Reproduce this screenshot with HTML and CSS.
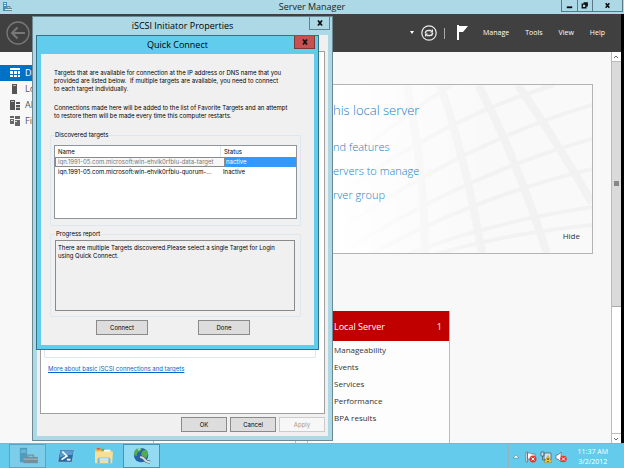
FILE: index.html
```html
<!DOCTYPE html>
<html lang="en">
<head>
<meta charset="utf-8">
<title>Server Manager</title>
<link rel="stylesheet" href="styles.css">
</head>
<body>
<div class="desktop">
  <header class="titlebar">
    <svg class="app-icon" viewBox="0 0 10 10" aria-hidden="true"><path fill="#3f8fc4" d="M1 0h4v9H1z"/><path fill="#e4f3fb" d="M2 1h2v1H2zM2 3h2v1H2z"/><path fill="#6c8593" d="M3 6h7v3H3z"/><path fill="none" stroke="#6c8593" d="M5 6V4.500h3V6"/><path fill="#dde7ec" d="M3 7h7v1H3z"/></svg>
    <h1>Server Manager</h1>
    <div class="window-buttons">
      <button class="wb-min" aria-label="Minimize"><svg viewBox="0 0 10 10"><path d="M2 6h6v2H2z"/></svg></button>
      <button class="wb-max" aria-label="Restore"><svg viewBox="0 0 10 10"><path fill="none" stroke="#111" stroke-width="1.500" d="M2.500 3.500h4v4h-4zM4 2h4v4"/></svg></button>
      <button class="wb-close" aria-label="Close"><svg viewBox="0 0 10 10"><path fill="none" stroke="#111" stroke-width="1.800" d="M3 2.500l4 5M7 2.500l-4 5"/></svg></button>
    </div>
  </header>

  <div class="workspace">
    <div class="toolbar">
      <button class="back" aria-label="Back"><svg viewBox="0 0 24 24"><circle cx="12" cy="12" r="11" fill="none" stroke="#787878" stroke-width="1.300"/><path fill="none" stroke="#787878" stroke-width="2" d="M19 12H6M11.500 6.500L6 12l5.500 5.500"/></svg></button>
      <div class="tools">
        <svg class="caret" viewBox="0 0 6 4" aria-hidden="true"><path fill="#fff" d="M1 0h4L3 3z"/></svg>
        <button class="refresh" aria-label="Refresh"><svg viewBox="0 0 16 16"><circle cx="8" cy="8" r="7.200" fill="none" stroke="#ececec" stroke-width="1.200"/><path fill="none" stroke="#ececec" stroke-width="1.500" d="M4.500 8.200V7.500a2.500 2.500 0 0 1 2.500-2h3.500M11.500 7.800v.700a2.500 2.500 0 0 1-2.500 2H5.500"/><path fill="#ececec" d="M9 7.500h3V4zM7 8.500H4V12z"/></svg></button>
        <span class="divider"></span>
        <button class="flag" aria-label="Notifications"><svg viewBox="0 0 12 16"><path fill="#fff" d="M0 0h2v15H0zM2 1h9L6 7H2z"/></svg></button>
        <button class="menu">Manage</button>
        <button class="menu">Tools</button>
        <button class="menu">View</button>
        <button class="menu">Help</button>
      </div>
    </div>

    <div class="main">
      <nav class="sidebar">
        <a class="active" href="#dashboard"><svg viewBox="0 0 12 12"><path fill="#fff" d="M1 1h10v2H1zM1 4h3v3H1zM5 4h3v3H5zM9 4h2v3H9zM1 8h3v2H1zM5 8h3v2H5zM9 8h2v2H9z"/></svg>Da</a>
        <a href="#local"><svg viewBox="0 0 12 12"><path fill="#555" d="M3 1h5v10H3z"/><path fill="#bbb" d="M4 2h3v1H4z"/></svg>Lo</a>
        <a href="#all"><svg viewBox="0 0 12 12"><path fill="#555" d="M1 1h5v10H1zM7 3h4v2H7zM7 6h4v5H7z"/><path fill="#bbb" d="M2 2h3v1H2zM7 8h4v1H7z"/></svg>Al</a>
        <a href="#files"><svg viewBox="0 0 12 12"><path fill="#666" d="M1 1h4v2H1zM1 4h4v5H1zM6 1h5v3H6zM6 5h5v6H6z"/><path fill="#ddd" d="M2 5h2v1H2zM6 6h2v1H6z"/></svg>Fil</a>
      </nav>
      <main class="dashboard">
        <section class="welcome">
          <svg class="pattern" viewBox="0 0 260 168" preserveAspectRatio="xMaxYMid slice" aria-hidden="true">
            <defs><linearGradient id="fade"><stop offset="0" stop-color="#fff"/><stop offset=".6" stop-color="#fff" stop-opacity="0"/></linearGradient></defs>
            <path fill="#f9f9f9" d="M0 0h260v168H0z"/>
            <g fill="none" stroke="#f2f2f2">
              <path stroke-width="8" d="M146 0q34 62 69 168M186 0q38 55 74 118M108 0q25 70 42 168M75 0q18 90 18 168"/>
              <path stroke-width="4" d="M0 115q110-82 222-115M0 150Q130 58 260 20M0 174Q130 90 260 54M20 180Q130 115 260 84M50 180Q140 140 260 122M90 174Q160 150 260 140M210 0l50-14M0 90Q70 30 120 0"/>
            </g>
            <path fill="url(#fade)" d="M0 0h260v168H0z"/>
          </svg>
          <h2>his local server</h2>
          <a href="#features">nd features</a>
          <a href="#servers">ervers to manage</a>
          <a href="#group">rver group</a>
          <button class="hide">Hide</button>
        </section>
        <div class="tiles">
          <section class="tile"></section>
          <section class="tile">
            <h3><span>Local Server</span><span>1</span></h3>
            <ul><li>Manageability</li><li>Events</li><li>Services</li><li>Performance</li><li>BPA results</li></ul>
          </section>
        </div>
      </main>
      <div class="scrollbar">
        <button aria-label="Scroll up"><svg viewBox="0 0 8 8"><path fill="none" stroke="#666" d="M2 5l2-2 2 2"/></svg></button>
        <div class="track"><div class="thumb"><span></span></div></div>
        <button aria-label="Scroll down"><svg viewBox="0 0 8 8"><path fill="none" stroke="#666" d="M2 3l2 2 2-2"/></svg></button>
      </div>
    </div>
  </div>

  <footer class="taskbar">
    <button class="task open" aria-label="Server Manager"><svg viewBox="0 0 24 20"><path fill="#4d9cbf" d="M3 1h8v16H3z"/><path fill="#87cbe5" d="M4 3h6v1H4zM4 5h6v1H4z"/><path fill="#75909c" d="M7 11h16v7H7z"/><path fill="none" stroke="#75909c" stroke-width="1.500" d="M12 11V9h6v2"/><path fill="#a9bec7" d="M7 13h16v1H7z"/></svg></button>
    <button class="task" aria-label="PowerShell"><svg viewBox="0 0 24 20"><path fill="#286ca3" stroke="#91c7e5" d="M6 3h14q1 0 1 1l-2 12q0 1-1 1H4q-1 0-1-1L5 4q0-1 1-1z"/><path fill="#5a9ccb" d="M6 4h14l-1 5Q11 8 5 12z"/><path fill="none" stroke="#fff" stroke-width="1.800" d="M8 5l5 5-6 4M13 14h4"/></svg></button>
    <button class="task" aria-label="File Explorer"><svg viewBox="0 0 24 20"><path fill="#e7bd58" d="M2 2h6l1 2h12v13H2z"/><path fill="#e35c37" d="M4 1h4v2H4z"/><path fill="#5cae54" d="M9 2h4v2H9z"/><path fill="#fff" d="M12 3h7v3h-7z"/><path fill="#f8df96" d="M2 5h20l-1 13H2z"/><path fill="none" stroke="#76bae4" stroke-width="2.500" d="M6 18v-4q0-1 1-1h10q1 0 1 1v4"/><path fill="#bde2f3" d="M7 12h10v3H7z"/></svg></button>
    <button class="task current" aria-label="iSCSI Initiator"><svg viewBox="0 0 24 20"><circle cx="11" cy="9" r="8" fill="#2363a6"/><path fill="#54ac52" d="M6 2q5-2 6 0l-2 3-3 1-1 4-3-1q0-5 3-7zM13 4l4-1 2 5-3 5-4-2-1-4z"/><path fill="#b7e4f7" d="M7 2q3-1 4 0L8 4z"/><path fill="none" stroke="#53666f" stroke-width="3.500" d="M10 11l3 1 4 4 4 1"/><path fill="none" stroke="#d7e0e4" stroke-width="2" d="M10 11l3 1 4 4 4 1"/></svg></button>
    <div class="tray">
      <svg viewBox="0 0 12 12"><path fill="#fff" stroke="#45798d" stroke-width=".500" d="M3 7l3-3 3 3z"/></svg>
      <svg viewBox="0 0 12 12"><path fill="#fff" stroke="#5b6870" stroke-width=".700" d="M1 1h1.500v10H1zM2.500 2h3l1 1H10v5H2.500z"/><circle cx="8" cy="8" r="3.500" fill="#dc3c32"/><path stroke="#fff" d="M6.500 6.500l3 3M9.500 6.500l-3 3"/></svg>
      <svg viewBox="0 0 12 12"><path fill="#d2e2ea" stroke="#4d6570" stroke-width=".800" d="M4 2h7v7H4zM1 1h3v4H1zM2.500 5v4h3"/><path fill="#f7c531" stroke="#9c7410" stroke-width=".400" d="M8 4.500l4 7H4z"/><path stroke="#222" d="M8 7v2M8 10v1"/></svg>
      <svg viewBox="0 0 12 12"><path fill="#fff" stroke="#5b6870" stroke-width=".700" d="M1 4h2l3-3v10L3 8H1z"/><circle cx="8.500" cy="8" r="3.300" fill="#dc3c32"/><path stroke="#fff" d="M7 6.500l3 3M10 6.500l-3 3"/></svg>
      <div class="clock"><time>11:37 AM</time><time>3/2/2012</time></div>
    </div>
  </footer>

  <section class="window properties" aria-label="iSCSI Initiator Properties">
    <div class="caption"><h2>iSCSI Initiator Properties</h2><button aria-label="Close"><svg viewBox="0 0 10 10"><path fill="none" stroke="#111" stroke-width="1.800" d="M3 2.500l4 5M7 2.500l-4 5"/></svg></button></div>
    <div class="client">
      <div class="sheet"><div class="group-edge"></div><a href="#more">More about basic iSCSI connections and targets</a></div>
      <div class="actions"><button>OK</button><button>Cancel</button><button disabled>Apply</button></div>
    </div>
  </section>

  <section class="window quick" aria-label="Quick Connect">
    <div class="caption"><h2>Quick Connect</h2><button aria-label="Close"><svg viewBox="0 0 10 10"><path fill="none" stroke="#111" stroke-width="1.800" d="M3 2.500l4 5M7 2.500l-4 5"/></svg></button></div>
    <div class="client">
      <p>Targets that are available for connection at the IP address or DNS name that you<br>provided are listed below.&nbsp; If multiple targets are available, you need to connect<br>to each target individually.</p>
      <p>Connections made here will be added to the list of Favorite Targets and an attempt<br>to restore them will be made every time this computer restarts.</p>
      <fieldset>
        <legend>Discovered targets</legend>
        <div class="list">
          <table>
            <thead><tr><th class="name">Name</th><th>Status</th></tr></thead>
            <tbody>
              <tr class="selected"><td class="name"><span class="tip">iqn.1991-05.com.microsoft:win-ehvik0rfbiu-data-target</span></td><td>nactive</td></tr>
              <tr><td class="name">iqn.1991-05.com.microsoft:win-ehvik0rfbiu-quorum-...</td><td>Inactive</td></tr>
            </tbody>
          </table>
        </div>
      </fieldset>
      <fieldset class="progress">
        <legend><label for="report">Progress report</label></legend>
        <textarea id="report" readonly>There are multiple Targets discovered.Please select a single Target for Login
using Quick Connect.</textarea>
      </fieldset>
      <div class="actions"><button>Connect</button><button>Done</button></div>
    </div>
  </section>
</div>
</body>
</html>
```
FILE: styles.css
```css
* { box-sizing: border-box; margin: 0; padding: 0; }
body { font: 9px/12px "Open Sans", "Noto Sans", sans-serif; color: #333; }
button { font: inherit; color: inherit; background: none; border: 0; }
svg { display: block; }
a { text-decoration: none; }
ul { list-style: none; }

.desktop { position: relative; display: flex; flex-direction: column; height: 100vh; overflow: hidden; background: #000; }

.titlebar { display: grid; grid-template-columns: 1fr auto 1fr; align-items: start; height: 14px; background: #add8e6; color: #222; }
.titlebar h1 { font-size: 9px; line-height: 14px; font-weight: 400; }
.app-icon { width: 10px; height: 10px; margin: 2px; }
.window-buttons { display: flex; justify-self: end; width: 62px; height: 12px; margin-right: 1px; border: 1px solid #587985; border-top: 0; }
.window-buttons button { display: grid; place-items: center; flex: 1; }
.window-buttons button + button { border-left: 1px solid #587985; }
.window-buttons .wb-close { flex: 2; }
.window-buttons svg { width: 9px; height: 9px; }

.workspace { flex: 1; display: flex; flex-direction: column; min-height: 0; margin-right: 3px; background: #f8f8f8; }
.toolbar { display: flex; align-items: center; justify-content: space-between; height: 38px; padding: 0 16px 0 6px; background: #404040; color: #fff; }
.back svg { width: 24px; height: 24px; }
.tools { display: flex; align-items: center; font-size: 7px; }
.caret { width: 6px; height: 4px; margin-right: 6px; }
.refresh svg { width: 16px; height: 16px; }
.divider { width: 1px; height: 11px; margin: 0 12px 0 7px; background: #aaa; }
.flag { margin-right: 14px; }
.flag svg { width: 12px; height: 16px; }
.menu + .menu { margin-left: 16px; }

.main { flex: 1; display: flex; min-height: 0; }
.sidebar { width: 130px; padding-top: 13px; }
.sidebar a { display: flex; align-items: center; gap: 4px; height: 16px; padding-left: 9px; color: #555; }
.sidebar a.active { background: #0072c6; color: #fff; }
.sidebar svg { width: 12px; height: 12px; }
.dashboard { flex: 1; padding: 32px 18px 0 23px; }
.welcome { position: relative; display: flex; flex-direction: column; height: 170px; padding: 13px 12px 0 179px; border: 1px solid #b4b4b4; background: #fff; color: #2280c4; font-size: 11px; line-height: 24px; font-weight: 300; }
.welcome > * { position: relative; }
.welcome .pattern { position: absolute; right: 0; top: 0; width: 260px; height: 100%; }
.welcome h2 { font-size: 13px; line-height: 24px; font-weight: 300; margin-bottom: 13px; }
.welcome a { color: inherit; }
.welcome .hide { align-self: flex-end; margin-top: 23px; font-size: 8px; line-height: 12px; font-weight: 400; color: #333; }
.tiles { display: grid; grid-template-columns: 143px 143px; gap: 11px; margin-top: 57px; }
.tile { height: 140px; background: #fdfdfd; border: 1px solid #bbb; border-top: 0; }
.tile h3 { display: flex; justify-content: space-between; height: 30px; padding: 0 7px 0 26px; background: #c00000; color: #fff; font-size: 9px; line-height: 31px; font-weight: 400; }
.tile ul { padding: 0 0 0 26px; font-size: 8px; line-height: 17px; }

.scrollbar { display: flex; flex-direction: column; width: 10px; border-left: 1px solid #bbb; background: #fff; }
.scrollbar button { height: 10px; border-bottom: 1px solid #bbb; }
.scrollbar button:last-child { border-top: 1px solid #bbb; border-bottom: 0; }
.scrollbar svg { width: 8px; height: 8px; }
.track { flex: 1; }
.thumb { display: grid; place-items: center; height: 66%; background: #dadada; border-bottom: 1px solid #aaa; }
.thumb span { width: 5px; height: 5px; background: #888; }

.taskbar { display: flex; height: 25px; padding-left: 9px; background: #64cbec; border-top: 1px solid #7fb5ca; }
.task { display: grid; place-items: center; width: 37px; margin-right: 1px; border: 1px solid transparent; }
.task svg { width: 22px; height: 18px; }
.task.open { background: #7ccdea; border-color: #57a7c4; }
.task.current { background: #93dbf2; border-color: #4694b1; }
.tray { display: flex; align-items: center; gap: 3px; margin-left: auto; padding: 2px 16px 0 1px; border-left: 1px solid #8fb5c3; color: #fff; }
.tray svg { width: 12px; height: 12px; }
.clock { margin-left: 8px; font-size: 7px; line-height: 10px; text-align: center; }
.clock time { display: block; }

.window { position: absolute; display: flex; flex-direction: column; font: 6px/8px Inter, "Liberation Sans", sans-serif; color: #000; }
.properties { left: 32px; top: 16px; width: 301px; height: 425px; padding: 0 4px 4px; border: 1px solid #6c8994; background: #add8e6; }
.quick { left: 36px; top: 35px; width: 283px; height: 315px; padding: 0 4px 4px; border: 1px solid #347188; background: #62ccec; }
.caption { position: relative; height: 18px; }
.caption h2 { font: 400 9px/18px "Open Sans", sans-serif; text-align: center; }
.caption button { position: absolute; right: -2px; top: 0; display: grid; place-items: center; width: 21px; height: 13px; border: 1px solid #608491; border-top: 0; }
.quick .caption button { background: #c75050; border-color: #7a3a3a; right: -1px; }
.caption svg { width: 10px; height: 10px; }
.client { flex: 1; display: flex; flex-direction: column; background: #f0f0f0; }

.properties .client { padding: 16px 3px 4px; }
.sheet { flex: 1; display: flex; flex-direction: column; padding: 0 8px 40px 7px; border: 1px solid #a0a0a0; background: #fff; }
.sheet .group-edge { flex: 1; margin: 0 0 7px -4px; border: 1px solid #dce7ef; border-top: 0; border-radius: 2px; }
.sheet a { color: #0066cc; text-decoration: underline; }
.actions { display: flex; }
.actions button { height: 15px; border: 1px solid #8a8a8a; background: #ddd; }
.properties .actions { justify-content: flex-end; gap: 3px; padding-top: 3px; }
.properties .actions button { width: 46px; }
.actions button:disabled { background: #f7f7f7; border-color: #ccc; color: #999; }

.quick .client { padding: 15px 13px 0; }
.quick p { margin-bottom: 11px; white-space: nowrap; }
.quick fieldset { margin: 0 0 4px -4px; padding: 6px 3px 6px; border: 1px solid #dce7ef; border-radius: 2px; }
.quick .progress { padding: 2px 5px 5px 4px; margin-bottom: 3px; }
.quick legend { padding: 0 1px; line-height: 8px; }
.list { height: 74px; border: 1px solid #8d949c; background: #fff; }
table { width: 100%; border-collapse: separate; border-spacing: 0; table-layout: fixed; }
th, td { height: 10px; padding: 0 3px; font-weight: 400; text-align: left; line-height: 10px; white-space: nowrap; }
th { height: 11px; line-height: 11px; }
th + th { border-left: 1px solid #dde7ee; }
.name { position: relative; width: 165px; }
.selected td + td { padding-left: 6px; background: #3399ff; color: #fff; }
.tip { position: absolute; left: 0; top: 0; z-index: 1; width: 170px; height: 10px; padding: 0 2px; line-height: 8px; border: 1px solid #8a8a8a; background: #f7f7f7; color: #777; }
textarea { display: block; width: 100%; height: 71px; padding: 3px 2px; border: 1px solid #8a8a8a; background: #f0f0f0; color: inherit; font: inherit; resize: none; overflow: hidden; white-space: pre; }
.quick .actions { gap: 50px; padding-left: 42px; }
.quick .actions button { width: 52px; }
```
